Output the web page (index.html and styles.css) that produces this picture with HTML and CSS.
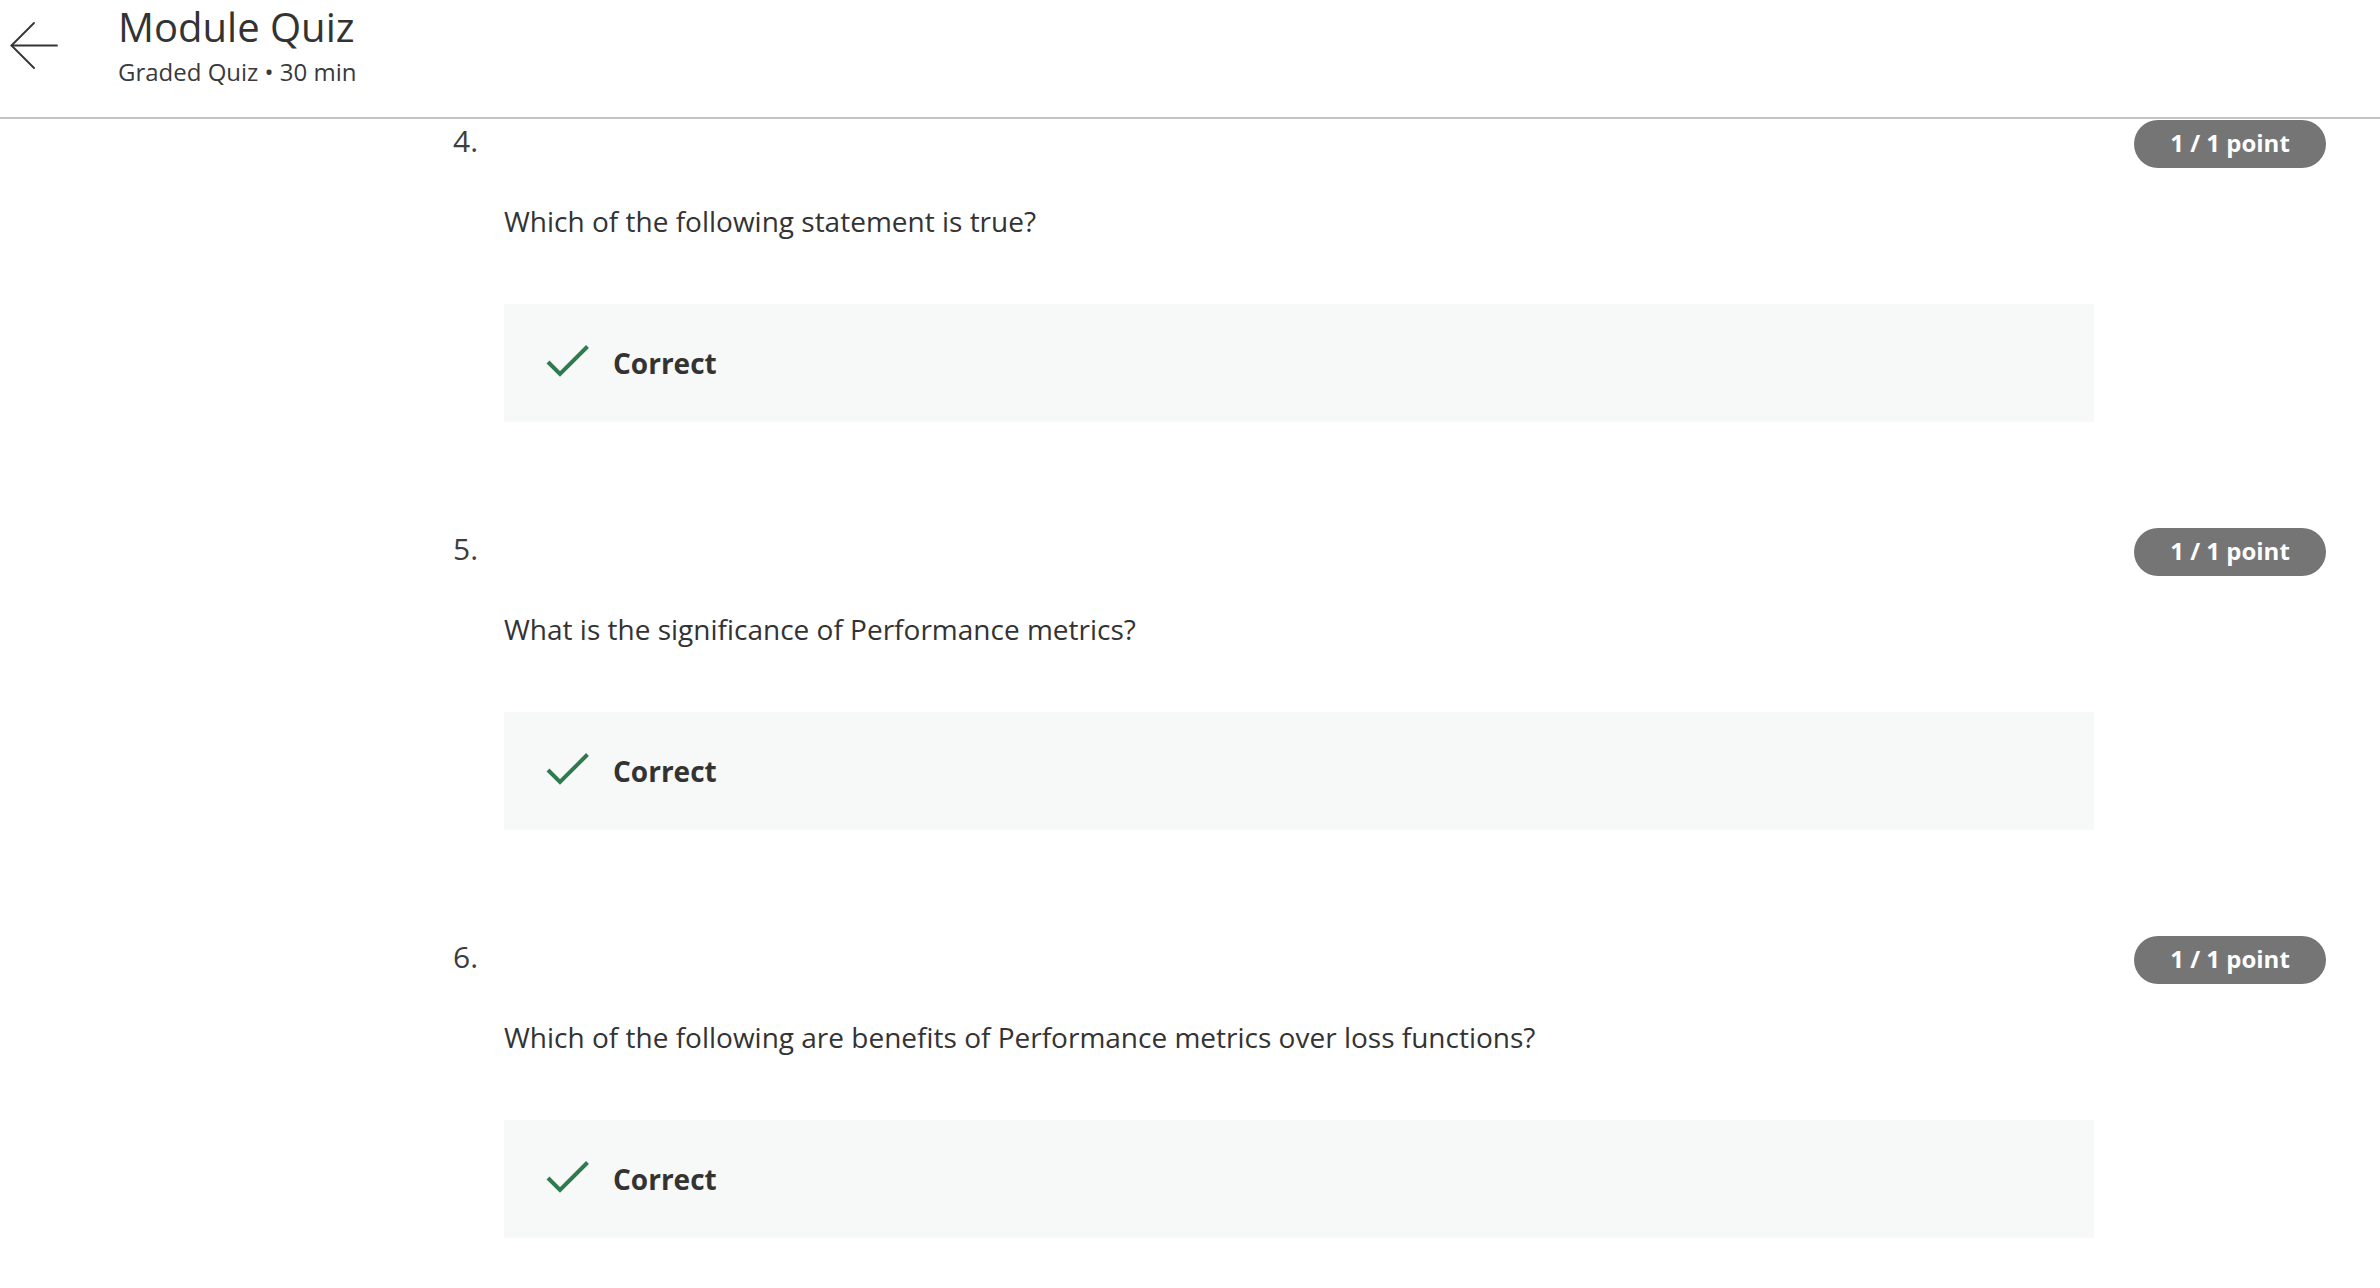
FILE: index.html
```html
<!DOCTYPE html>
<html lang="en">
<head>
<meta charset="utf-8">
<title>Module Quiz</title>
<link rel="stylesheet" href="styles.css">
</head>
<body>
<header class="topbar">
  <button class="back" aria-label="Back">
    <svg width="48" height="48" viewBox="0 0 48 48" fill="none" stroke="#333" stroke-width="1.8" stroke-linecap="round" stroke-linejoin="round">
      <path d="M1.5 23.5 H47"/>
      <path d="M24 1 L1.5 23.5 L24 46"/>
    </svg>
  </button>
  <div class="titles">
    <h1 class="title">Module Quiz</h1>
    <div class="subtitle">Graded Quiz • 30 min</div>
  </div>
</header>

<main class="questions">
  <section class="question">
    <div class="q-head">
      <span class="q-num">4.</span>
      <span class="badge">1 / 1 point</span>
    </div>
    <div class="q-body">
      <p class="q-text">Which of the following statement is true?</p>
      <div class="result">
        <svg class="check" width="44" height="42" viewBox="0 0 44 42" fill="none" stroke="#2f7a4f" stroke-width="4">
          <path d="M3 20 L15 32 L42.5 4.5"/>
        </svg>
        <span class="result-label">Correct</span>
      </div>
    </div>
  </section>

  <section class="question">
    <div class="q-head">
      <span class="q-num">5.</span>
      <span class="badge">1 / 1 point</span>
    </div>
    <div class="q-body">
      <p class="q-text">What is the significance of Performance metrics?</p>
      <div class="result">
        <svg class="check" width="44" height="42" viewBox="0 0 44 42" fill="none" stroke="#2f7a4f" stroke-width="4">
          <path d="M3 20 L15 32 L42.5 4.5"/>
        </svg>
        <span class="result-label">Correct</span>
      </div>
    </div>
  </section>

  <section class="question">
    <div class="q-head">
      <span class="q-num">6.</span>
      <span class="badge">1 / 1 point</span>
    </div>
    <div class="q-body">
      <p class="q-text">Which of the following are benefits of Performance metrics over loss functions?</p>
      <div class="result">
        <svg class="check" width="44" height="42" viewBox="0 0 44 42" fill="none" stroke="#2f7a4f" stroke-width="4">
          <path d="M3 20 L15 32 L42.5 4.5"/>
        </svg>
        <span class="result-label">Correct</span>
      </div>
    </div>
  </section>
</main>
</body>
</html>
```

FILE: styles.css
```css
* {
  box-sizing: border-box;
}

html, body {
  margin: 0;
  padding: 0;
  background: #ffffff;
}

body {
  font-family: "Open Sans", "Noto Sans", "Liberation Sans", sans-serif;
  color: #333333;
  width: 2380px;
  height: 1288px;
  overflow: hidden;
}

.topbar {
  display: flex;
  align-items: flex-start;
  height: 119px;
  padding-top: 3px;
  border-bottom: 2px solid #c4c4c4;
}

.back {
  display: flex;
  margin: 19px 0 0 10px;
  padding: 0;
  border: 0;
  background: none;
  width: 48px;
  height: 48px;
}

.titles {
  margin-left: 60px;
  display: flex;
  flex-direction: column;
}

.title {
  margin: 0;
  font-size: 40px;
  font-weight: 400;
  line-height: 47px;
  color: #333333;
}

.subtitle {
  margin-top: 6px;
  font-size: 24px;
  line-height: 32px;
  color: #3a3a3a;
}

.questions {
  display: flex;
  flex-direction: column;
  padding: 1px 54px 0 453px;
}

.question {
  display: flex;
  flex-direction: column;
  margin-bottom: 106px;
}

.q-head {
  display: flex;
  justify-content: space-between;
  align-items: flex-start;
  height: 48px;
}

.q-num {
  font-size: 30px;
  line-height: 41px;
  color: #3d3d3d;
}

.badge {
  display: inline-flex;
  align-items: center;
  justify-content: center;
  width: 192px;
  height: 48px;
  border-radius: 24px;
  background: #757575;
  color: #ffffff;
  font-size: 24px;
  font-weight: 700;
  line-height: 48px;
  padding-bottom: 2px;
}

.q-body {
  margin-left: 51px;
  width: 1590px;
}

.q-text {
  margin: 32px 0 0;
  font-size: 28px;
  line-height: 42px;
  color: #333333;
}

.result {
  margin-top: 62px;
  height: 118px;
  display: flex;
  align-items: center;
  padding-left: 41px;
  background: #f7f9f8;
}

.check {
  display: block;
  flex: none;
  margin-right: 24px;
}

.result-label {
  font-size: 28px;
  font-weight: 700;
  line-height: 42px;
  color: #333333;
}
```
